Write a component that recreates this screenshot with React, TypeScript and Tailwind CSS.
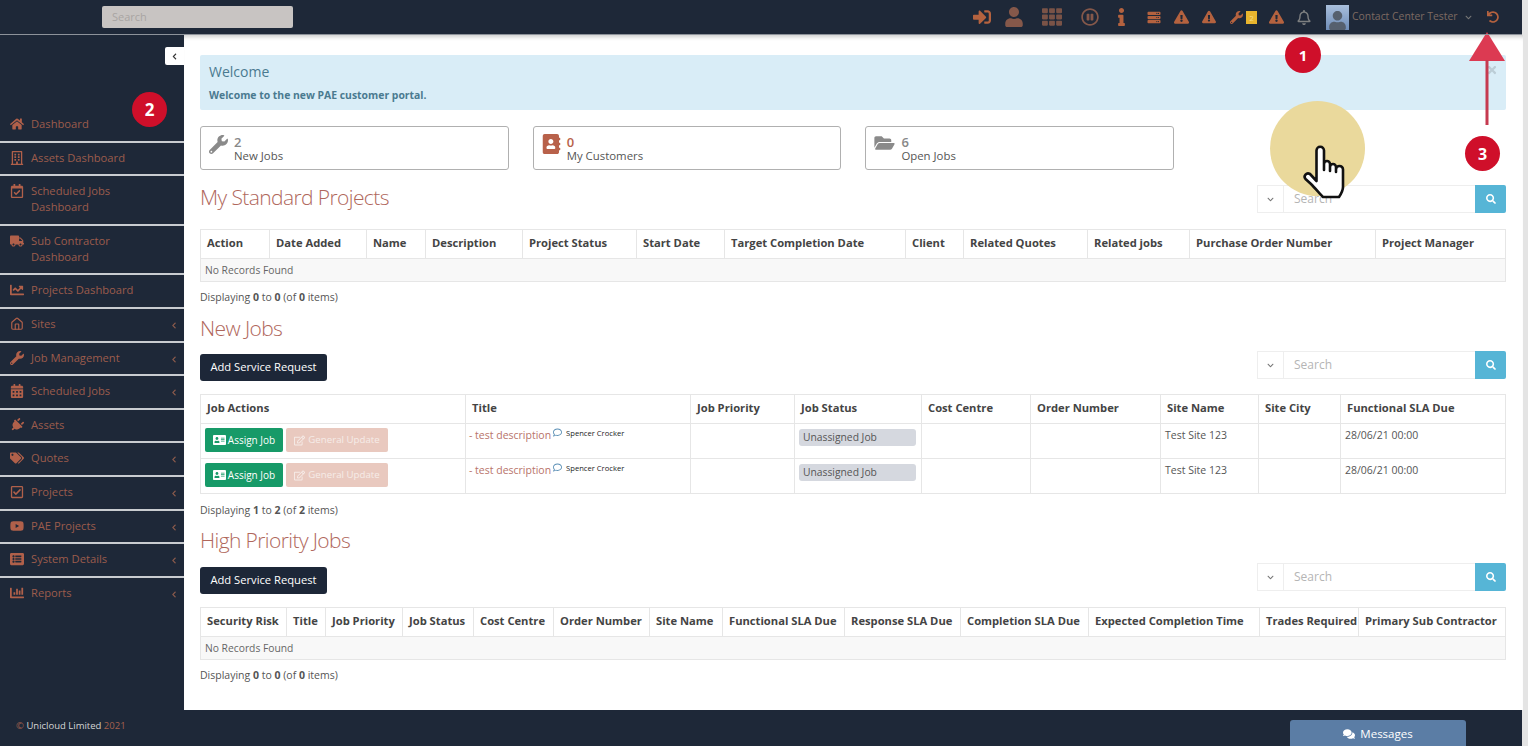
import React from "react";
import {
  FaSignInAlt, FaUser, FaTh, FaRegPauseCircle, FaInfo, FaServer, FaExclamationTriangle, FaWrench,
  FaRegBell, FaUndo, FaHome, FaTruck, FaCalendarAlt, FaPlug, FaTags, FaRegCheckSquare, FaYoutube,
  FaChartBar, FaAddressBook, FaFolderOpen, FaRegEdit, FaAddressCard, FaRegComment, FaComments, FaSearch,
  FaChevronDown, FaChevronLeft, FaTimes, FaRegCalendarCheck, FaRegBuilding, FaChartLine, FaListAlt,
} from "react-icons/fa";
import { Home } from "lucide-react";

const font = { fontFamily: '"Open Sans", "Liberation Sans", sans-serif' };

type NavItem = { label: string[]; icon: React.ReactNode; sub?: boolean };
const ic = "w-[14px] h-[14px]";
const nav: NavItem[] = [
  { label: ["Dashboard"], icon: <FaHome className={ic} /> },
  { label: ["Assets Dashboard"], icon: <FaRegBuilding className={ic} /> },
  { label: ["Scheduled Jobs", "Dashboard"], icon: <FaRegCalendarCheck className={ic} /> },
  { label: ["Sub Contractor", "Dashboard"], icon: <FaTruck className={ic} /> },
  { label: ["Projects Dashboard"], icon: <FaChartLine className={ic} /> },
  { label: ["Sites"], icon: <Home className={ic} />, sub: true },
  { label: ["Job Management"], icon: <FaWrench className={ic} />, sub: true },
  { label: ["Scheduled Jobs"], icon: <FaCalendarAlt className={ic} />, sub: true },
  { label: ["Assets"], icon: <FaPlug className={`${ic} rotate-45`} /> },
  { label: ["Quotes"], icon: <FaTags className={ic} />, sub: true },
  { label: ["Projects"], icon: <FaRegCheckSquare className={ic} />, sub: true },
  { label: ["PAE Projects"], icon: <FaYoutube className={ic} />, sub: true },
  { label: ["System Details"], icon: <FaListAlt className={ic} />, sub: true },
  { label: ["Reports"], icon: <FaChartBar className={ic} />, sub: true },
];

function SearchGroup() {
  return (
    <div className="flex h-[28px] w-[249px] shrink-0">
      <div className="w-[27px] flex items-center justify-center border border-[#eeeeee] text-[#777777]">
        <FaChevronDown className="w-[7px] h-[7px]" />
      </div>
      <div className="w-[191px] flex items-center pl-[10px] border-y border-[#eeeeee] text-[12px] text-[#b5b5b5]">Search</div>
      <div className="w-[31px] flex items-center justify-center bg-[#56b5d6] rounded-r-[2px] text-white">
        <FaSearch className="w-[10px] h-[10px]" />
      </div>
    </div>
  );
}

function Table({ cols, heads, children }: { cols: number[]; heads: string[]; children: React.ReactNode }) {
  return (
    <table className="table-fixed border-collapse w-[1305px] text-[11px]">
      <colgroup>
        {cols.map((w, i) => (
          <col key={i} style={{ width: w }} />
        ))}
      </colgroup>
      <thead>
        <tr className="h-[29px]">
          {heads.map((h) => (
            <th key={h} className="border border-[#e6e6e6] text-left pl-[6px] pb-[2px] font-bold text-[11.2px] text-[#444444] whitespace-nowrap">
              {h}
            </th>
          ))}
        </tr>
      </thead>
      <tbody>{children}</tbody>
    </table>
  );
}

function Empty({ n }: { n: number }) {
  return (
    <tr className="h-[23px] bg-[#f8f8f8]">
      <td colSpan={n} className="border border-[#e6e6e6] pl-[4px] pt-[1px] text-[10.3px] text-[#666666]">No Records Found</td>
    </tr>
  );
}

function Displaying({ a, b, c }: { a: number; b: number; c: number }) {
  return (
    <div className="h-[16px] leading-[16px] text-[10.5px] text-[#555555]">
      Displaying <b>{a}</b> to <b>{b}</b> (of <b>{c}</b> items)
    </div>
  );
}

function Heading({ children }: { children: React.ReactNode }) {
  return <h2 className="text-[21px] leading-[30px] font-light tracking-[-0.6px] text-[#b0675c]">{children}</h2>;
}

function AddButton() {
  return (
    <button className="w-[127px] h-[27px] rounded-[3px] bg-[#1d2738] text-white text-[11.2px]">Add Service Request</button>
  );
}

function Card({ icon, n, label, nClass }: { icon: React.ReactNode; n: string; label: string; nClass: string }) {
  return (
    <div className="w-[308.7px] h-[44px] border border-[#b0b0b0] rounded-[3px] flex items-start pl-[8px] pt-[8px] gap-[6px]">
      {icon}
      <div className="text-[11.4px] leading-[14px] text-[#555555]">
        <div className={`font-semibold text-[13px] leading-[14px] ${nClass}`}>{n}</div>
        <div>{label}</div>
      </div>
    </div>
  );
}

function JobRow() {
  return (
    <tr className="h-[35px]">
      <td className="border border-[#e6e6e6] pl-[4px] align-top pt-[4px]">
        <div className="flex gap-[3px]">
          <div className="w-[78px] h-[24px] rounded-[2px] bg-[#179a68] text-white flex items-center justify-center gap-[2px] text-[10px]">
            <FaAddressCard className="w-[13px] h-[12px]" /> Assign Job
          </div>
          <div className="w-[102px] h-[24px] rounded-[2px] bg-[#e9c9bf] text-[#f6ece8] flex items-center justify-center gap-[3px] text-[9.7px]">
            <FaRegEdit className="w-[11px] h-[11px]" /> General Update
          </div>
        </div>
      </td>
      <td className="border border-[#e6e6e6] pl-[3px] align-top pt-[4px] text-[10.5px] text-[#b8736a] whitespace-nowrap">
        <span className="inline-flex items-start">
          <span>- test description</span>
          <FaRegComment className="w-[9px] h-[9px] ml-[2px] text-[#5a8fb5]" />
          <span className="ml-[4px] text-[7.6px] leading-[10px] text-[#222222]">Spencer Crocker</span>
        </span>
      </td>
      <td className="border border-[#e6e6e6]" />
      <td className="border border-[#e6e6e6] pl-[4px] pr-[5px] align-top pt-[5px]">
        <div className="h-[17px] rounded-[3px] bg-[#d5d8df] text-[10.3px] leading-[17px] pl-[4px] text-[#555555]">Unassigned Job</div>
      </td>
      <td className="border border-[#e6e6e6]" />
      <td className="border border-[#e6e6e6]" />
      <td className="border border-[#e6e6e6] pl-[4px] align-top pt-[4px] text-[#555555] text-[10.5px]">Test Site 123</td>
      <td className="border border-[#e6e6e6]" />
      <td className="border border-[#e6e6e6] pl-[4px] align-top pt-[4px] text-[#555555] text-[10.5px]">28/06/21 00:00</td>
    </tr>
  );
}

export default function App() {
  return (
    <div style={font} className="relative w-[1528px] h-[746px] overflow-hidden flex bg-[#e4e4e4]">
      <div className="w-[1522px] flex flex-col bg-[#1e2838]">
        {/* Top bar */}
        <header className="h-[35px] shrink-0 flex items-center border-b border-[#8d929a] text-[#b4623f] z-10">
          <div className="ml-[102px] w-[191px] h-[22px] rounded-[2px] bg-[#c8c4c2] pl-[10px] text-[11px] leading-[22px] text-[#a8a4a2]">Search</div>
          <FaSignInAlt className="ml-[679px] w-[20px] h-[18px]" />
          <FaUser className="ml-[13px] w-[18px] h-[20px] text-[#85584a]" />
          <FaTh className="ml-[17px] w-[24px] h-[20px] text-[#7a5347]" />
          <FaRegPauseCircle className="ml-[17px] w-[18px] h-[18px] text-[#85584a]" />
          <FaInfo className="ml-[18px] w-[9px] h-[18px]" />
          <FaServer className="ml-[20px] w-[16px] h-[13px]" />
          <FaExclamationTriangle className="ml-[12px] w-[15px] h-[14px]" />
          <FaExclamationTriangle className="ml-[13px] w-[14px] h-[14px]" />
          <FaWrench className="ml-[14px] w-[13px] h-[13px]" />
          <div className="ml-[3px] w-[11px] h-[13px] bg-[#e8b52e] text-[8px] leading-[13px] text-center text-[#f5dc8a]">2</div>
          <FaExclamationTriangle className="ml-[12px] w-[15px] h-[14px]" />
          <FaRegBell className="ml-[13px] w-[14px] h-[15px] text-[#7d7f80]" />
          <div className="ml-[15px] w-[23px] h-[25px] bg-gradient-to-b from-[#a9bfdc] to-[#6f8db8] flex items-end justify-center overflow-hidden">
            <FaUser className="w-[17px] h-[19px] text-[#56606e]" />
          </div>
          <span className="ml-[3px] text-[10.4px] text-[#7d6a62] whitespace-nowrap">Contact Center Tester</span>
          <FaChevronDown className="ml-[7px] w-[7px] h-[7px] text-[#777777]" />
          <FaUndo className="ml-[15px] w-[12px] h-[12px]" />
        </header>

        <div className="flex flex-1 min-h-0">
          {/* Sidebar */}
          <aside className="w-[184px] shrink-0 flex flex-col text-[11.2px] text-[#9c5c4c]">
            <div className="h-[12px]" />
            <div className="self-end w-[19px] h-[18px] bg-white rounded-l-[2px] flex items-center justify-center text-[#333333]">
              <FaChevronLeft className="w-[7px] h-[7px]" />
            </div>
            <div className="h-[44px]" />
            {nav.map((n, i) => (
              <div
                key={n.label[0] + i}
                className={`flex items-start pl-[10px] pr-[7px] pt-[7px] pb-[8.6px] leading-[16px] ${i === nav.length - 1 ? "" : "border-b-2 border-[#c9ccd0]"}`}
              >
                <span className="w-[21px] h-[16px] flex items-center shrink-0 text-[#b0604a]">{n.icon}</span>
                <span className="flex-1">
                  {n.label.map((l) => (
                    <div key={l}>{l}</div>
                  ))}
                </span>
                {n.sub && <FaChevronLeft className="w-[6px] h-[7px] mt-[6px] text-[#8a5a4c]" />}
              </div>
            ))}
          </aside>

          {/* Main */}
          <main className="flex-1 bg-white pl-[16px] pr-[17px] pt-[20px] shadow-[inset_0_5px_4px_-3px_rgba(0,0,0,0.2)]">
            <div className="relative h-[55px] bg-[#d9edf7] rounded-[2px] px-[9px] pt-[8px] text-[#4a7a90]">
              <div className="text-[14px] leading-[18px]">Welcome</div>
              <div className="mt-[7px] text-[10.4px] leading-[14px] font-bold">Welcome to the new PAE customer portal.</div>
              <FaTimes className="absolute right-[8px] top-[9px] w-[12px] h-[12px] text-[#bccdd6]" />
            </div>

            <div className="mt-[16px] flex gap-[24px]">
              <Card icon={<FaWrench className="w-[19px] h-[19px] text-[#8a8a8a]" />} n="2" nClass="text-[#888888]" label="New Jobs" />
              <Card icon={<FaAddressBook className="w-[19px] h-[20px] -mt-[1px] text-[#b8614a]" />} n="0" nClass="text-[#b8614a]" label="My Customers" />
              <Card icon={<FaFolderOpen className="w-[21px] h-[18px] -mt-[1px] text-[#8a8a8a]" />} n="6" nClass="text-[#888888]" label="Open Jobs" />
            </div>

            <div className="mt-[15px] flex items-start justify-between h-[44px]">
              <div className="mt-[-3px]"><Heading>My Standard Projects</Heading></div>
              <SearchGroup />
            </div>
            <Table
              cols={[69, 97, 59, 97, 114, 88, 181, 58, 124, 102, 186, 130]}
              heads={["Action", "Date Added", "Name", "Description", "Project Status", "Start Date", "Target Completion Date", "Client", "Related Quotes", "Related jobs", "Purchase Order Number", "Project Manager"]}
            >
              <Empty n={12} />
            </Table>
            <div className="mt-[7px]"><Displaying a={0} b={0} c={0} /></div>

            <div className="mt-[8px]"><Heading>New Jobs</Heading></div>
            <div className="mt-[8px] flex items-start justify-between h-[31px]">
              <div className="mt-[2px]"><AddButton /></div>
              <SearchGroup />
            </div>
            <div className="mt-[12px]">
              <Table
                cols={[265, 225, 104, 127, 109, 130, 98, 82, 165]}
                heads={["Job Actions", "Title", "Job Priority", "Job Status", "Cost Centre", "Order Number", "Site Name", "Site City", "Functional SLA Due"]}
              >
                <JobRow />
                <JobRow />
              </Table>
            </div>
            <div className="mt-[8px]"><Displaying a={1} b={2} c={2} /></div>

            <div className="mt-[7px]"><Heading>High Priority Jobs</Heading></div>
            <div className="mt-[8px] flex items-start justify-between h-[31px]">
              <div className="mt-[3px]"><AddButton /></div>
              <SearchGroup />
            </div>
            <div className="mt-[13px]">
              <Table
                cols={[86, 39, 77, 71, 80, 96, 73, 122, 116, 128, 171, 99, 147]}
                heads={["Security Risk", "Title", "Job Priority", "Job Status", "Cost Centre", "Order Number", "Site Name", "Functional SLA Due", "Response SLA Due", "Completion SLA Due", "Expected Completion Time", "Trades Required", "Primary Sub Contractor"]}
              >
                <Empty n={13} />
              </Table>
            </div>
            <div className="mt-[7px]"><Displaying a={0} b={0} c={0} /></div>
          </main>
        </div>

        {/* Footer */}
        <footer className="h-[36px] shrink-0 flex items-start justify-between">
          <div className="ml-[16px] mt-[9px] text-[9.5px] leading-[14px] text-[#a4604e]">
            © <span className="text-[#d5d5d5]">Unicloud Limited</span> 2021
          </div>
          <div className="mr-[56px] mt-[10px] w-[176px] h-[26px] rounded-t-[3px] bg-[#5b7da5] text-white text-[11.5px] pt-[2px] flex items-center justify-center gap-[5px]">
            <FaComments className="w-[12px] h-[12px]" /> Messages
          </div>
        </footer>
      </div>

      {/* Annotations laid over the page */}
      <div className="absolute left-[1270px] top-[101px] w-[95px] h-[95px] rounded-full bg-[#ead99c]" />
      <svg className="absolute left-[1300px] top-[143px]" width="48" height="58" viewBox="0 0 48 58">
        <path
          d="M16.5 38 V7.5 a3.75 3.75 0 0 1 7.5 0 V27 V21 a3 3 0 0 1 6 0 V28 V24 a3 3 0 0 1 6 0 V29 V26.5 a3.5 3.5 0 0 1 7 0 V44 c0 4 -2 7 -4 10 H23 c-3 -3 -8 -9 -12 -13 L5.5 36 c-2.5 -3 1 -7 4.5 -5 L16.5 38 Z"
          fill="#ffffff"
          stroke="#111111"
          strokeWidth="2.6"
          strokeLinejoin="round"
          strokeLinecap="round"
        />
      </svg>
      <div className="absolute left-[1285px] top-[37px] w-[36px] h-[36px] rounded-full bg-[#cf0f2a] text-white font-bold text-[15px] flex items-center justify-center">1</div>
      <div className="absolute left-[132px] top-[92px] w-[35px] h-[35px] rounded-full bg-[#cf0f2a] text-white font-bold text-[17px] flex items-center justify-center">2</div>
      <div className="absolute left-[1465px] top-[136px] w-[35px] h-[35px] rounded-full bg-[#cf0f2a] text-white font-bold text-[16px] flex items-center justify-center">3</div>
      <svg className="absolute left-[1466px] top-[30px]" width="42" height="97" viewBox="0 0 42 97">
        <polygon points="21,2 3,31 39,31" fill="#dc3a52" />
        <rect x="19.5" y="30" width="3" height="65" fill="#c63a50" />
      </svg>
    </div>
  );
}
